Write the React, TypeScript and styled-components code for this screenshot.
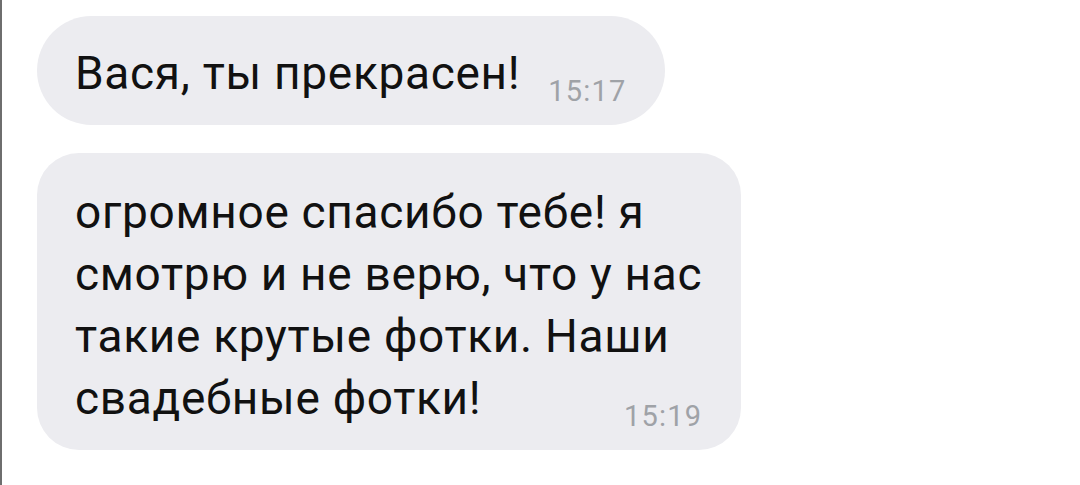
import * as React from 'react';
import styled, { createGlobalStyle } from 'styled-components';

const GlobalStyle = createGlobalStyle`
  html, body {
    margin: 0;
    padding: 0;
    background: #fff;
  }

  body {
    font-family: Roboto, 'Noto Sans', 'Liberation Sans', sans-serif;
    -webkit-font-smoothing: antialiased;
  }
`;

const messages = [
  {
    id: 1,
    lines: ['Вася, ты прекрасен!'],
    time: '15:17',
    pill: true,
  },
  {
    id: 2,
    lines: [
      'огромное спасибо тебе! я',
      'смотрю и не верю, что у нас',
      'такие крутые фотки. Наши',
      'свадебные фотки!',
    ],
    time: '15:19',
    pill: false,
  },
];

export default function App() {
  return (
    <>
      <GlobalStyle />
      <Chat>
        {messages.map((m) => {
          const head = m.lines.slice(0, -1);
          const last = m.lines[m.lines.length - 1];
          return (
            <Bubble key={m.id} $pill={m.pill}>
              {head.map((line) => (
                <Line key={line}>{line}</Line>
              ))}
              <LastLine $pill={m.pill}>
                <span>{last}</span>
                <Time>{m.time}</Time>
              </LastLine>
            </Bubble>
          );
        })}
      </Chat>
    </>
  );
}

const Chat = styled.div`
  box-sizing: border-box;
  min-height: 485px;
  border-left: 2px solid #6e6e6e;
  padding: 16px 0 0 35px;
  display: flex;
  flex-direction: column;
  align-items: flex-start;
  gap: 28px;
`;

const Bubble = styled.div<{ $pill: boolean }>`
  background: #ececf0;
  color: #111;
  font-size: 46px;
  letter-spacing: 0.7px;
  line-height: 62px;
  padding: ${(p) => (p.$pill ? '26px 38px 21px 38px' : '28px 39px 21px 38px')};
  border-radius: ${(p) => (p.$pill ? '55px' : '42px')};
  white-space: nowrap;
`;

const Line = styled.div``;

const LastLine = styled.div<{ $pill: boolean }>`
  display: flex;
  align-items: flex-end;
  justify-content: space-between;
  gap: ${(p) => (p.$pill ? '28px' : '40px')};
`;

const Time = styled.span`
  font-size: 29px;
  letter-spacing: 1.2px;
  line-height: 26px;
  color: #9fa2a7;
`;
